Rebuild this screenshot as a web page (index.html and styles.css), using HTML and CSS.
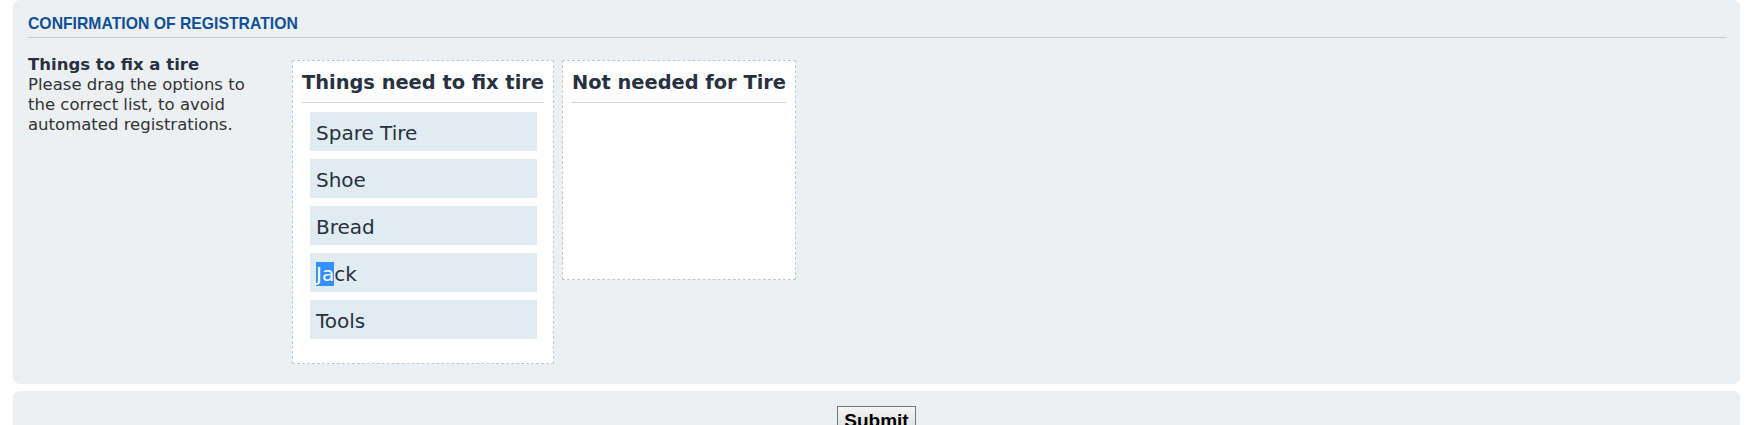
FILE: index.html
```html
<!DOCTYPE html>
<html lang="en">
<head>
    <meta charset="UTF-8">
    <meta name="viewport" content="width=device-width, initial-scale=1.0">
    <title>Confirmation of registration</title>
    <link rel="stylesheet" href="styles.css">
</head>
<body>
    <div class="page">
        <div class="panel">
            <h3>Confirmation of registration</h3>
            <dl class="confirm">
                <dt><strong>Things to fix a tire</strong><br>Please drag the options to the correct list, to avoid automated registrations.</dt>
                <dd class="sort-boxes">
                    <div class="sort-box">
                        <h4>Things need to fix tire</h4>
                        <ul class="sort-list">
                            <li>Spare Tire</li>
                            <li>Shoe</li>
                            <li>Bread</li>
                            <li><span class="sel">Ja</span>ck</li>
                            <li>Tools</li>
                        </ul>
                    </div>
                    <div class="sort-box">
                        <h4>Not needed for Tire</h4>
                        <ul class="sort-list"></ul>
                    </div>
                </dd>
            </dl>
        </div>
        <div class="panel submit-panel">
            <button type="submit" class="button1">Submit</button>
        </div>
    </div>
</body>
</html>
```

FILE: styles.css
```css
body {
    margin: 0;
    background-color: #fff;
    color: #333;
    font-family: "DejaVu Sans", Verdana, sans-serif;
}
.page {
    padding: 0 24px 0 13px;
}
.panel {
    background-color: #ecf0f3;
    border-radius: 7px;
    padding: 15px 13px 20px 15px;
}
.panel h3 {
    margin: 0;
    padding-bottom: 4px;
    border-bottom: 1px solid #ccc;
    font-family: "Liberation Sans", Arial, sans-serif;
    font-size: 15.75px;
    font-weight: bold;
    text-transform: uppercase;
    color: #115098;
}
.confirm {
    display: flex;
    margin: 13px 0 0;
}
.confirm dt {
    width: 234px;
    padding: 4px 30px 0 0;
    font-size: 16.5px;
    line-height: 20px;
    color: #333;
}
.confirm dt strong {
    color: #28313f;
}
.sort-boxes {
    display: flex;
    align-items: flex-start;
    gap: 8px;
    margin: 9px 0 0;
}
.sort-box {
    background-color: #fff;
    border: 1px dashed #c5c9cc;
    padding: 0 9px;
}
.sort-box h4 {
    margin: 0;
    padding: 10px 0 7px;
    border-bottom: 1px solid #d3d6d9;
    font-size: 19.4px;
    line-height: 24px;
    font-weight: bold;
    color: #28313f;
    white-space: nowrap;
}
.sort-list {
    list-style: none;
    margin: 0;
    padding: 9px 7px 24px 8px;
    min-height: 176px;
    box-sizing: border-box;
}
.sort-list li {
    background-color: #e1ebf2;
    padding: 9px 6px 6px;
    font-size: 20px;
    line-height: 24px;
    color: #28313f;
}
.sort-list li + li {
    margin-top: 8px;
}
.sel {
    background-color: #3390ff;
    color: #fff;
}
.submit-panel {
    margin-top: 7px;
    padding: 15px;
    text-align: center;
}
.button1 {
    font-family: "Liberation Sans", Arial, sans-serif;
    font-size: 19px;
    font-weight: bold;
    color: #000;
    padding: 3px 6px;
    border: 1px solid #767676;
    background: linear-gradient(#f4f4f4, #dcdcdc);
    cursor: pointer;
}
```
